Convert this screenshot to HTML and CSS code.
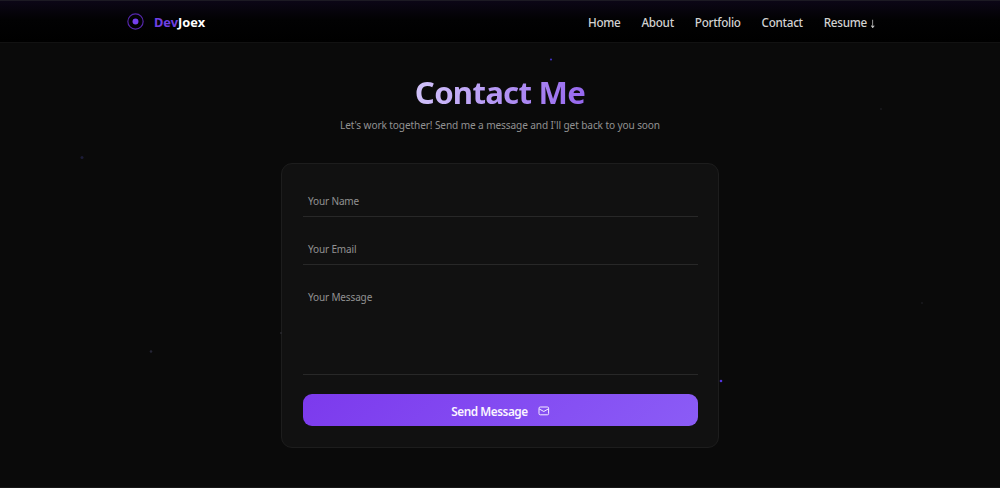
FILE: index.html
```html
<!DOCTYPE html>
<html lang="en">
<head>
<meta charset="utf-8">
<title>DevJoex - Contact</title>
<link rel="stylesheet" href="styles.css">
</head>
<body>
<header class="header">
  <a class="brand">
    <svg class="brand-mark" viewBox="0 0 16 16"><circle cx="8" cy="8" r="7.2" fill="none" stroke="#5527ac" stroke-width="1.1"/><circle cx="8" cy="8" r="2.8" fill="#7640ee"/></svg>
    <span class="brand-name"><span class="brand-accent">Dev</span>Joex</span>
  </a>
  <nav class="nav">
    <a>Home</a><a>About</a><a>Portfolio</a><a>Contact</a><a>Resume <span class="arrow">↓</span></a>
  </nav>
</header>
<main class="main">
  <h1 class="title"><span class="title-text">Contact Me</span></h1>
  <p class="subtitle">Let's work together! Send me a message and I'll get back to you soon</p>
  <form class="card">
    <div class="field">Your Name</div>
    <div class="field">Your Email</div>
    <div class="field field-message">Your Message</div>
    <button class="send" type="button"><span>Send Message</span>
      <svg class="mail" viewBox="0 0 12 10" fill="none" stroke="#f5edff" stroke-width="1"><rect x="1" y="1" width="9.6" height="7.8" rx="1.2"/><path d="M1.2 2.9 5.8 5.5 10.4 2.9"/></svg>
    </button>
  </form>
</main>
<svg class="particles" viewBox="0 0 1000 488"><circle cx="551" cy="59.5" r="1.1" fill="#4030c0"/><circle cx="721" cy="381" r="1.3" fill="#5234dd"/><circle cx="82" cy="157.5" r="1.5" fill="#1c1c38"/><circle cx="151" cy="351.5" r="1.3" fill="#252535"/><circle cx="281" cy="333" r="1" fill="#29292e"/><circle cx="881" cy="109" r="1.2" fill="#161619"/><circle cx="922" cy="303" r="1.2" fill="#161619"/></svg>
</body>
</html>
```
FILE: styles.css
```css
* { box-sizing: border-box; }
body {
  margin: 0;
  height: 488px;
  overflow: hidden;
  background: #0a0a0a;
  border-bottom: 1px solid #171717;
  font-family: "Noto Sans", "Open Sans", sans-serif;
  color: #fff;
}
.header {
  height: 43px;
  padding: 0 124px 0 127px;
  display: flex;
  align-items: center;
  justify-content: space-between;
  background: linear-gradient(#0b0616, #020203 45%, #000);
  border-top: 1px solid #1c1a23;
  border-bottom: 1px solid #121212;
}
.brand { display: flex; align-items: center; gap: 10px; }
.brand-mark { width: 17px; height: 17px; }
.brand-name { font-size: 12.8px; font-weight: 700; letter-spacing: 0; }
.brand-accent { color: #7040e4; }
.nav {
  display: flex;
  gap: 21px;
  font-size: 11.7px;
  font-weight: 500;
  letter-spacing: -0.3px;
  color: #d2d2d2;
  white-space: nowrap;
}
.arrow {
  display: inline-block;
  font-family: "DejaVu Sans", sans-serif;
  font-size: 8px;
  line-height: 10px;
  transform: scaleY(1.4);
}
.main { display: flex; flex-direction: column; align-items: center; }
.title { margin: 28px 0 0; font-size: 31.2px; line-height: 42px; font-weight: 700; letter-spacing: -0.75px; }
.title-text {
  background: linear-gradient(100deg, #d3c5fa, #9566ee);
  -webkit-background-clip: text;
  background-clip: text;
  color: transparent;
}
.subtitle { margin: 4px 0 0; font-size: 10.1px; line-height: 16px; color: #929292; white-space: nowrap; letter-spacing: -0.11px; }
.card {
  width: 438px;
  height: 285px;
  margin-top: 30px;
  padding: 22px 20px 22px 21px;
  background: #111;
  border: 1px solid #1d1d1d;
  border-radius: 11px;
}
.field {
  height: 31px;
  margin-bottom: 17px;
  padding: 7px 5px 0;
  border-bottom: 1px solid #282828;
  font-size: 10px;
  line-height: 16px;
  letter-spacing: -0.14px;
  color: #929292;
}
.field-message { height: 93px; margin-bottom: 19px; }
.send {
  width: 100%;
  height: 32px;
  padding: 1px 0 0;
  display: flex;
  align-items: center;
  justify-content: center;
  gap: 10px;
  border: 0;
  border-radius: 9px;
  background: linear-gradient(135deg, #7c3aed, #8b5cf6);
  color: #faf5ff;
  font: 600 11.8px/18px "Noto Sans", "Open Sans", sans-serif;
  letter-spacing: -0.48px;
}
.mail { width: 12px; height: 10px; }
.particles { position: absolute; inset: 0; width: 1000px; height: 488px; pointer-events: none; }
```
